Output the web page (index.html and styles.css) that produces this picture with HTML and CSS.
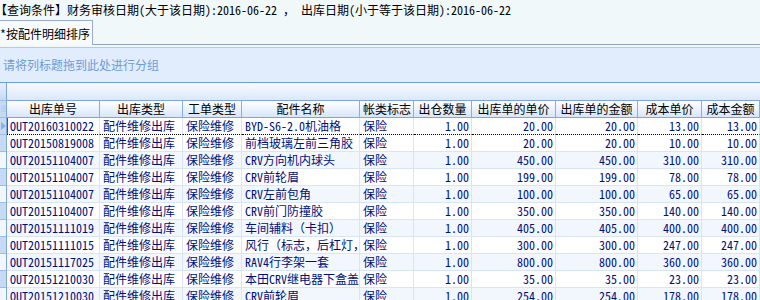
FILE: index.html
```html
<!DOCTYPE html>
<html lang="zh-CN">
<head>
    <meta charset="UTF-8">
    <title>出库明细</title>
    <link rel="stylesheet" href="styles.css">
</head>
<body>

<div class="query-bar">【查询条件】财务审核日期(大于该日期):2016-06-22 ， 出库日期(小于等于该日期):2016-06-22</div>

<div class="tabs">
    <div class="tab active">*按配件明细排序</div>
</div>

<div class="group-panel">请将列标题拖到此处进行分组</div>

<table class="grid">
    <colgroup>
        <col style="width: 7px">
        <col style="width: 93px">
        <col style="width: 83px">
        <col style="width: 59px">
        <col style="width: 118px">
        <col style="width: 54px">
        <col style="width: 58px">
        <col style="width: 84px">
        <col style="width: 82px">
        <col style="width: 64px">
        <col style="width: 58px">
    </colgroup>
    <thead>
        <tr class="band">
            <th class="indicator"></th>
            <th colspan="10"></th>
        </tr>
        <tr class="head">
            <th class="indicator"><span class="star">※</span></th>
            <th>出库单号</th>
            <th>出库类型</th>
            <th>工单类型</th>
            <th>配件名称</th>
            <th>帐类标志</th>
            <th>出仓数量</th>
            <th>出库单的单价</th>
            <th>出库单的金额</th>
            <th>成本单价</th>
            <th>成本金额</th>
        </tr>
    </thead>
    <tbody>
        <tr class="focused">
            <td class="indicator"><span class="arrow"></span></td>
            <td>OUT20160310022</td><td>配件维修出库</td><td>保险维修</td><td>BYD-S6-2.0机油格</td><td>保险</td>
            <td class="num">1.00</td><td class="num">20.00</td><td class="num">20.00</td><td class="num">13.00</td><td class="num">13.00</td>
        </tr>
        <tr>
            <td class="indicator"></td>
            <td>OUT20150819008</td><td>配件维修出库</td><td>保险维修</td><td>前档玻璃左前三角胶</td><td>保险</td>
            <td class="num">1.00</td><td class="num">20.00</td><td class="num">20.00</td><td class="num">10.00</td><td class="num">10.00</td>
        </tr>
        <tr>
            <td class="indicator"></td>
            <td>OUT20151104007</td><td>配件维修出库</td><td>保险维修</td><td>CRV方向机内球头</td><td>保险</td>
            <td class="num">1.00</td><td class="num">450.00</td><td class="num">450.00</td><td class="num">310.00</td><td class="num">310.00</td>
        </tr>
        <tr>
            <td class="indicator"></td>
            <td>OUT20151104007</td><td>配件维修出库</td><td>保险维修</td><td>CRV前轮眉</td><td>保险</td>
            <td class="num">1.00</td><td class="num">199.00</td><td class="num">199.00</td><td class="num">78.00</td><td class="num">78.00</td>
        </tr>
        <tr>
            <td class="indicator"></td>
            <td>OUT20151104007</td><td>配件维修出库</td><td>保险维修</td><td>CRV左前包角</td><td>保险</td>
            <td class="num">1.00</td><td class="num">100.00</td><td class="num">100.00</td><td class="num">65.00</td><td class="num">65.00</td>
        </tr>
        <tr>
            <td class="indicator"></td>
            <td>OUT20151104007</td><td>配件维修出库</td><td>保险维修</td><td>CRV前门防撞胶</td><td>保险</td>
            <td class="num">1.00</td><td class="num">350.00</td><td class="num">350.00</td><td class="num">140.00</td><td class="num">140.00</td>
        </tr>
        <tr>
            <td class="indicator"></td>
            <td>OUT20151111019</td><td>配件维修出库</td><td>保险维修</td><td>车间辅料（卡扣）</td><td>保险</td>
            <td class="num">1.00</td><td class="num">405.00</td><td class="num">405.00</td><td class="num">400.00</td><td class="num">400.00</td>
        </tr>
        <tr>
            <td class="indicator"></td>
            <td>OUT20151111015</td><td>配件维修出库</td><td>保险维修</td><td>风行（标志，后杠灯，</td><td>保险</td>
            <td class="num">1.00</td><td class="num">300.00</td><td class="num">300.00</td><td class="num">247.00</td><td class="num">247.00</td>
        </tr>
        <tr>
            <td class="indicator"></td>
            <td>OUT20151117025</td><td>配件维修出库</td><td>保险维修</td><td>RAV4行李架一套</td><td>保险</td>
            <td class="num">1.00</td><td class="num">800.00</td><td class="num">800.00</td><td class="num">360.00</td><td class="num">360.00</td>
        </tr>
        <tr>
            <td class="indicator"></td>
            <td>OUT20151210030</td><td>配件维修出库</td><td>保险维修</td><td>本田CRV继电器下盒盖</td><td>保险</td>
            <td class="num">1.00</td><td class="num">35.00</td><td class="num">35.00</td><td class="num">23.00</td><td class="num">23.00</td>
        </tr>
        <tr>
            <td class="indicator"></td>
            <td>OUT20151210030</td><td>配件维修出库</td><td>保险维修</td><td>CRV前轮眉</td><td>保险</td>
            <td class="num">1.00</td><td class="num">254.00</td><td class="num">254.00</td><td class="num">178.00</td><td class="num">178.00</td>
        </tr>
    </tbody>
</table>

</body>
</html>
```

FILE: styles.css
```css
body {
    margin: 0;
    width: 760px;
    height: 300px;
    overflow: hidden;
    font-family: "Noto Sans Mono CJK SC", "Noto Sans CJK SC", monospace;
    font-size: 12px;
    background-color: #f0f8fa;
    color: #000000;
}

.query-bar {
    height: 20px;
    line-height: 19px;
    margin-left: -5px;
    white-space: nowrap;
}

.tabs {
    height: 24px;
    display: flex;
    border-bottom: 1px solid #8fa3c4;
}

.tab {
    width: 92px;
    line-height: 25px;
    background-color: #f8fbfd;
    border-top: 1px solid #9aaccb;
    border-right: 1px solid #9aaccb;
    margin-bottom: -1px;
    white-space: nowrap;
}

.group-panel {
    margin-top: 2px;
    height: 34px;
    line-height: 33px;
    padding-left: 3px;
    background-color: #e1edfd;
    border-top: 1px solid #b9c9e2;
    border-bottom: 1px solid #6d9dd6;
    color: #6e9bd6;
}

.grid {
    border-spacing: 0;
    table-layout: fixed;
    width: 760px;
    background-color: #ffffff;
}

.grid th,
.grid td {
    padding: 0 3px;
    white-space: nowrap;
    overflow: hidden;
    font-weight: normal;
    line-height: 16px;
    height: 16px;
}

.grid .band th {
    height: 17px;
    background: linear-gradient(#f7faff, #dbe8fb);
    border-bottom: 1px solid #7ea6dc;
    padding: 0;
}

.grid .head th {
    background: linear-gradient(#ffffff, #d7e6fa);
    border-right: 1px solid #86aee2;
    border-bottom: 1px solid #7ea6dc;
    text-align: center;
    color: #000000;
}

.grid th.indicator,
.grid td.indicator {
    padding: 0;
    background: #c6daf5;
    border-right: 1px solid #7ea6dc;
    border-bottom: 1px solid #9dbde6;
    position: relative;
}

.grid .band th.indicator {
    background: linear-gradient(#e6effc, #c6daf5);
}

.star {
    color: #9fbde3;
    font-size: 8px;
    display: block;
    text-align: center;
}

.arrow {
    position: absolute;
    left: 1px;
    top: 4px;
    border-left: 5px solid #8db0dd;
    border-top: 4px solid transparent;
    border-bottom: 4px solid transparent;
}

.grid td {
    color: #00107a;
    border-right: 1px solid #d7e5f6;
    border-bottom: 1px solid #d7e5f6;
}

.grid tbody tr:nth-child(odd) td {
    background-color: #f2f7fe;
}

.grid tbody tr.focused td {
    background-color: #ffffff;
    border-bottom: 1px dotted #000000;
}

.grid tbody tr.focused td:nth-child(2) {
    box-shadow: inset 1px 0 0 #555555;
}

.grid tbody tr.focused td.indicator {
    background: #c6daf5;
    border-bottom: 1px solid #9dbde6;
}

.grid td.num {
    text-align: right;
    padding-right: 2px;
}
```
